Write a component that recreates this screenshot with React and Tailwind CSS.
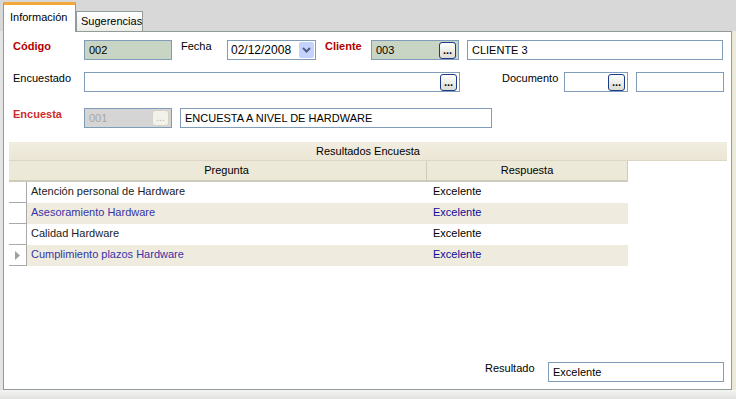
import React from 'react';

function DotsButton({ disabled }) {
    return (
        <div
            className={
                disabled
                    ? 'mr-[2px] flex h-[16px] w-[17px] items-end justify-center rounded-[3px] border border-[#d6d3c4] bg-[#f2f1ea] pb-[2px] text-[10px] leading-none text-[#b8b6aa]'
                    : 'mr-[2px] flex h-[17px] w-[17px] items-end justify-center rounded-[3px] border border-[#1c3a8a] bg-gradient-to-b from-white to-[#dcdcd2] pb-[2px] text-[11px] leading-none font-bold text-black'
            }
        >
            ...
        </div>
    );
}

function Field({ w, bg = 'bg-white', text = '', color = 'text-black', button, disabled }) {
    return (
        <div className={`flex h-[20px] items-center justify-between border border-[#7f9db9] ${bg}`} style={{ width: w }}>
            <span className={`pl-[4px] ${color}`}>{text}</span>
            {button && <DotsButton disabled={disabled} />}
        </div>
    );
}

const rows = [
    { q: 'Atención personal de Hardware', r: 'Excelente', alt: false },
    { q: 'Asesoramiento Hardware', r: 'Excelente', alt: true },
    { q: 'Calidad Hardware', r: 'Excelente', alt: false },
    { q: 'Cumplimiento plazos Hardware', r: 'Excelente', alt: true, current: true },
];

export default function App() {
    return (
        <div className="flex h-[399px] w-[736px] flex-col overflow-hidden bg-[#d8d8d8] font-['Liberation_Sans',Arial,sans-serif] text-[11px] text-black">
            {/* pestañas */}
            <div className="relative z-10 flex h-[31px] shrink-0 items-end pl-[3px]">
                <div className="mb-[-1px] flex h-[30px] w-[73px] items-center border-x border-t-[3px] border-x-[#919b9c] border-t-[#f2a93b] bg-white pb-[2px] pl-[6px]">
                    Información
                </div>
                <div className="flex h-[20px] w-[67px] items-center border-x border-t border-[#919b9c] bg-gradient-to-b from-white to-[#ecebe4] pl-[4px]">
                    Sugerencias
                </div>
            </div>

            <div className="flex h-[359px] shrink-0">
                <div className="w-[3px] bg-[#e4e4e4]" />
                <div className="flex flex-1 flex-col border border-[#919b9c] bg-white">
                    {/* fila 1 */}
                    <div className="mt-[8px] flex items-start pl-[9px] leading-[13px]">
                        <span className="w-[71px] font-bold text-[#b00000]">Código</span>
                        <Field w={88} bg="bg-[#c9d5c4]" text="002" />
                        <span className="ml-[9px] w-[46px]">Fecha</span>
                        <div className="flex h-[20px] w-[89px] items-center justify-between border border-[#7f9db9] bg-white">
                            <span className="pl-[3px] text-[12px]">02/12/2008</span>
                            <div className="mr-[1px] flex h-[16px] w-[15px] items-center justify-center rounded-[2px] bg-[#c3d3fd]">
                                <svg width="9" height="6" viewBox="0 0 9 6">
                                    <path d="M1 1 L4.5 4.5 L8 1" stroke="#4d6185" strokeWidth="2" fill="none" />
                                </svg>
                            </div>
                        </div>
                        <span className="ml-[9px] w-[46px] font-bold text-[#b00000]">Cliente</span>
                        <Field w={88} bg="bg-[#c9d5c4]" text="003" button />
                        <div className="ml-[8px]">
                            <Field w={256} text="CLIENTE 3" />
                        </div>
                    </div>

                    {/* fila 2 */}
                    <div className="mt-[12px] flex items-start pl-[9px] leading-[13px]">
                        <span className="w-[71px]">Encuestado</span>
                        <Field w={376} button />
                        <span className="ml-[42px] w-[62px]">Documento</span>
                        <Field w={64} button />
                        <div className="ml-[8px]">
                            <Field w={88} />
                        </div>
                    </div>

                    {/* fila 3 */}
                    <div className="mt-[16px] flex items-start pl-[9px] leading-[13px]">
                        <span className="w-[71px] font-bold text-[#cc2e2e]">Encuesta</span>
                        <Field w={88} bg="bg-[#d5d5d5]" text="001" color="text-[#a8a8a8]" button disabled />
                        <div className="ml-[8px]">
                            <Field w={312} text="ENCUESTA A NIVEL DE HARDWARE" />
                        </div>
                    </div>

                    {/* tabla */}
                    <div className="ml-[5px] mt-[14px] w-[718px]">
                        <div className="flex h-[19px] items-center justify-center border-b border-[#dcd7c4] bg-gradient-to-b from-[#f1ede0] to-[#ebe6d5]">
                            Resultados Encuesta
                        </div>
                        <div className="flex h-[21px] w-[619px] border-b-2 border-[#cfcbbb] bg-[#ece9d8]">
                            <div className="w-[18px]" />
                            <div className="flex w-[400px] items-center justify-center border-r border-[#d0ccbc]">Pregunta</div>
                            <div className="flex w-[201px] items-center justify-center border-r border-[#d0ccbc]">Respuesta</div>
                        </div>
                        {rows.map((row) => (
                            <div key={row.q} className={`flex h-[21px] w-[619px] ${row.alt ? 'bg-[#f0ebdf]' : 'bg-white'}`}>
                                <div className="flex w-[18px] items-center justify-center border-r border-b border-[#a9a9a9] bg-white">
                                    {row.current && (
                                        <svg width="5" height="9" viewBox="0 0 5 9">
                                            <path d="M0 0 L5 4.5 L0 9 Z" fill="#a0a0a0" />
                                        </svg>
                                    )}
                                </div>
                                <div className={`flex w-[400px] items-center pb-[2px] pl-[4px] ${row.alt ? 'text-[#3434a8]' : 'text-[#222]'}`}>{row.q}</div>
                                <div className={`flex w-[201px] items-center pb-[2px] pl-[6px] ${row.alt ? 'text-[#0c0c98]' : 'text-black'}`}>{row.r}</div>
                            </div>
                        ))}
                    </div>

                    {/* resultado */}
                    <div className="mb-[7px] mt-auto flex items-start justify-end pr-[7px] leading-[13px]">
                        <span className="w-[63px]">Resultado</span>
                        <Field w={176} text="Excelente" />
                    </div>
                </div>
                <div className="w-[4px] bg-[#ece9d8]" />
            </div>

            <div className="h-[9px] shrink-0 bg-gradient-to-b from-[#f4f4f2] to-[#e2e2e2]" />
        </div>
    );
}
